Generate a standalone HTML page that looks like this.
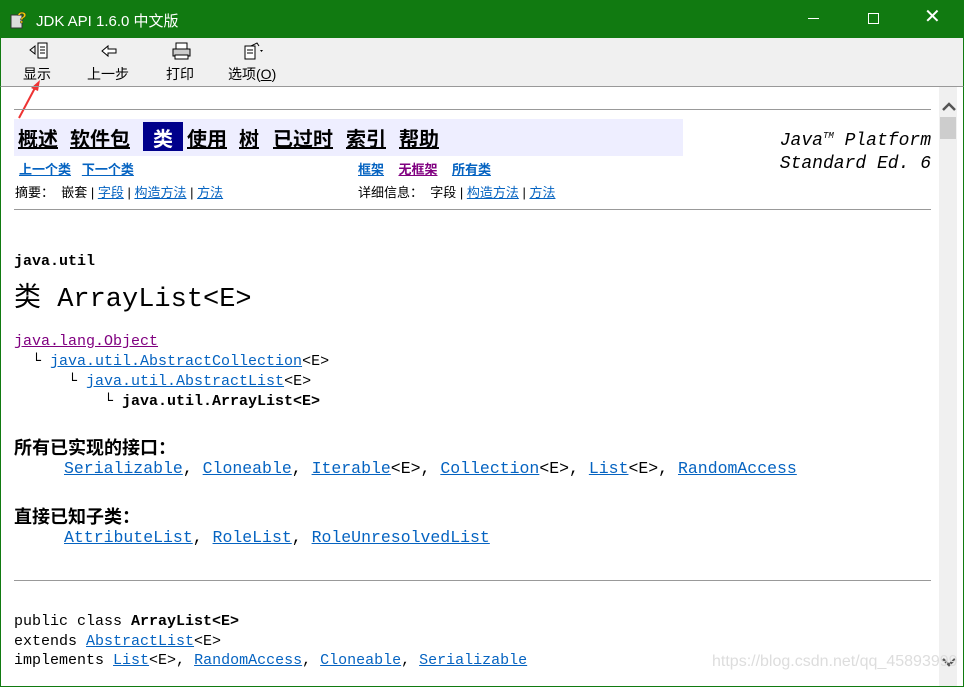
<!DOCTYPE html>
<html><head><meta charset="utf-8"><style>
*{margin:0;padding:0;box-sizing:border-box}
body{width:964px;height:687px;overflow:hidden;position:relative;background:#fff;font-family:"Liberation Sans","Noto Sans CJK SC",sans-serif}
.title{position:absolute;left:0;top:0;width:964px;height:38px;background:#117a11;color:#fff;font-size:15px}
.title span{position:absolute;left:36px;top:10px}
.tb{position:absolute;left:0;top:38px;width:964px;height:48px;background:#f0f0f0;border-left:1px solid #117a11;border-right:1px solid #117a11}
.tb div{position:absolute;top:26px;font-size:14px;color:#000}
.content{position:absolute;left:0;top:86px;width:964px;height:601px;border:1px solid #117a11;border-top:1px solid #999;overflow:hidden}
.sb{position:absolute;right:6px;top:0;width:18px;bottom:0;background:#f0f0f0}
.abs{position:absolute;white-space:nowrap}
.mono{font-family:"Liberation Mono","Noto Sans CJK SC",monospace}
a{color:#0563c1;text-decoration:underline}
.v{color:#800080}
hr{position:absolute;height:1px;background:#999;border:0}
.nav{position:absolute;top:36px;font-size:20px;font-weight:bold;color:#000;text-decoration:underline;white-space:nowrap}
.s{font-size:13px}
</style></head><body>
<div class="title">
<svg style="position:absolute;left:10px;top:9px" width="20" height="20"><rect x="1" y="6" width="11" height="13" fill="#ddd" stroke="#333"/><text x="7" y="14" font-size="16" font-weight="bold" fill="#f0d000" stroke="#333" stroke-width=".5">?</text></svg>
<span>JDK API 1.6.0 中文版</span>
<div class="abs" style="left:808px;top:18px;width:11px;height:1px;background:#fff"></div>
<div class="abs" style="left:868px;top:13px;width:11px;height:11px;border:1px solid #fff"></div>
<div class="abs" style="left:924px;top:4px;font-size:20px;color:#fff">✕</div>
</div>
<div class="tb">
<svg style="position:absolute;left:27px;top:4px" width="22" height="18"><path d="M2 8l5-4v8z" fill="none" stroke="#000"/><rect x="10" y="1" width="9" height="15" fill="#fff" stroke="#000"/><path d="M12 5h5M12 8h5M12 11h5" stroke="#000"/></svg>
<svg style="position:absolute;left:100px;top:6px" width="18" height="14"><path d="M1 7l6-5v3h8v4H7v3z" fill="#fff" stroke="#000"/></svg>
<svg style="position:absolute;left:170px;top:4px" width="22" height="18"><rect x="5" y="1" width="11" height="6" fill="#fff" stroke="#000"/><rect x="2" y="7" width="17" height="7" fill="#ccc" stroke="#000"/><rect x="4" y="13" width="13" height="4" fill="#fff" stroke="#000"/></svg>
<svg style="position:absolute;left:242px;top:4px" width="22" height="18"><rect x="2" y="4" width="10" height="13" fill="#fff" stroke="#000"/><path d="M4 8h6M4 11h6M8 4l6-3 2 3" stroke="#000" fill="none"/><path d="M17 8l3 0-1.5 2z" fill="#000"/></svg>
<div style="left:22px">显示</div><div style="left:86px">上一步</div><div style="left:165px">打印</div><div style="left:227px">选项(<u>O</u>)</div>
</div>
<svg style="position:absolute;left:16px;top:78px" width="28" height="42"><path d="M3 40L20 8" stroke="#e33" stroke-width="2"/><path d="M24 2l-9 8 7 3z" fill="#e33"/></svg>
<div class="content">
<div class="sb"><svg style="position:absolute;left:3px;top:15px" width="14" height="9"><path d="M1 8l6-6 6 6" stroke="#555" stroke-width="2.5" fill="none"/></svg><div class="abs" style="left:1px;top:30px;width:16px;height:22px;background:#cdcdcd"></div><svg style="position:absolute;left:3px;top:571px" width="14" height="9"><path d="M1 1l6 6 6-6" stroke="#555" stroke-width="2.5" fill="none"/></svg></div>
<hr style="left:13px;top:22px;width:917px">
<div class="abs" style="left:13px;top:32px;width:669px;height:37px;background:#eeeeff"></div>
<div class="abs" style="left:142px;top:35px;width:40px;height:29px;background:#00008b"></div>
<div class="nav" style="left:17px">概述</div>
<div class="nav" style="left:69px">软件包</div>
<div class="nav" style="left:152px;color:#fff;text-decoration:none">类</div>
<div class="nav" style="left:186px">使用</div>
<div class="nav" style="left:238px">树</div>
<div class="nav" style="left:272px">已过时</div>
<div class="nav" style="left:345px">索引</div>
<div class="nav" style="left:398px">帮助</div>
<div class="abs mono" style="left:760px;top:38px;font-size:18px;font-style:italic;line-height:23px;text-align:right;width:170px">Java<sup style="font-size:9px">TM</sup> Platform<br>Standard Ed. 6</div>
<div class="abs s" style="left:18px;top:72px;font-weight:bold"><a>上一个类</a>&nbsp;&nbsp; <a>下一个类</a></div>
<div class="abs s" style="left:357px;top:72px;font-weight:bold"><a>框架</a>&nbsp;&nbsp;&nbsp; <a class="v">无框架</a>&nbsp;&nbsp;&nbsp; <a>所有类</a></div>
<div class="abs s" style="left:14px;top:95px">摘要：&nbsp; 嵌套 | <a>字段</a> | <a>构造方法</a> | <a>方法</a></div>
<div class="abs s" style="left:357px;top:95px">详细信息：&nbsp; 字段 | <a>构造方法</a> | <a>方法</a></div>
<hr style="left:13px;top:122px;width:917px">
<div class="abs mono" style="left:13px;top:166px;font-size:15px;font-weight:bold">java.util</div>
<div class="abs mono" style="left:13px;top:188px;font-size:27px">类 ArrayList&lt;E&gt;</div>
<div class="abs mono" style="left:13px;top:245px;font-size:15px;line-height:20px"><a class="v">java.lang.Object</a><br>&nbsp;&nbsp;└ <a>java.util.AbstractCollection</a>&lt;E&gt;<br>&nbsp;&nbsp;&nbsp;&nbsp;&nbsp;&nbsp;└ <a>java.util.AbstractList</a>&lt;E&gt;<br>&nbsp;&nbsp;&nbsp;&nbsp;&nbsp;&nbsp;&nbsp;&nbsp;&nbsp;&nbsp;└ <b>java.util.ArrayList&lt;E&gt;</b></div>
<div class="abs" style="left:13px;top:347px;font-size:18px;font-weight:bold">所有已实现的接口：</div>
<div class="abs mono" style="left:63px;top:372px;font-size:16.5px"><a>Serializable</a>, <a>Cloneable</a>, <a>Iterable</a>&lt;E&gt;, <a>Collection</a>&lt;E&gt;, <a>List</a>&lt;E&gt;, <a>RandomAccess</a></div>
<div class="abs" style="left:13px;top:416px;font-size:18px;font-weight:bold">直接已知子类：</div>
<div class="abs mono" style="left:63px;top:441px;font-size:16.5px"><a>AttributeList</a>, <a>RoleList</a>, <a>RoleUnresolvedList</a></div>
<hr style="left:13px;top:493px;width:917px">
<div class="abs mono" style="left:13px;top:525px;font-size:15px;line-height:19.5px">public class <b>ArrayList&lt;E&gt;</b><br>extends <a>AbstractList</a>&lt;E&gt;<br>implements <a>List</a>&lt;E&gt;, <a>RandomAccess</a>, <a>Cloneable</a>, <a>Serializable</a></div>
<div class="abs" style="left:711px;top:566px;font-size:16px;color:#ddd">https://blog.csdn.net/qq_45893999</div>
</div>
</body></html>
